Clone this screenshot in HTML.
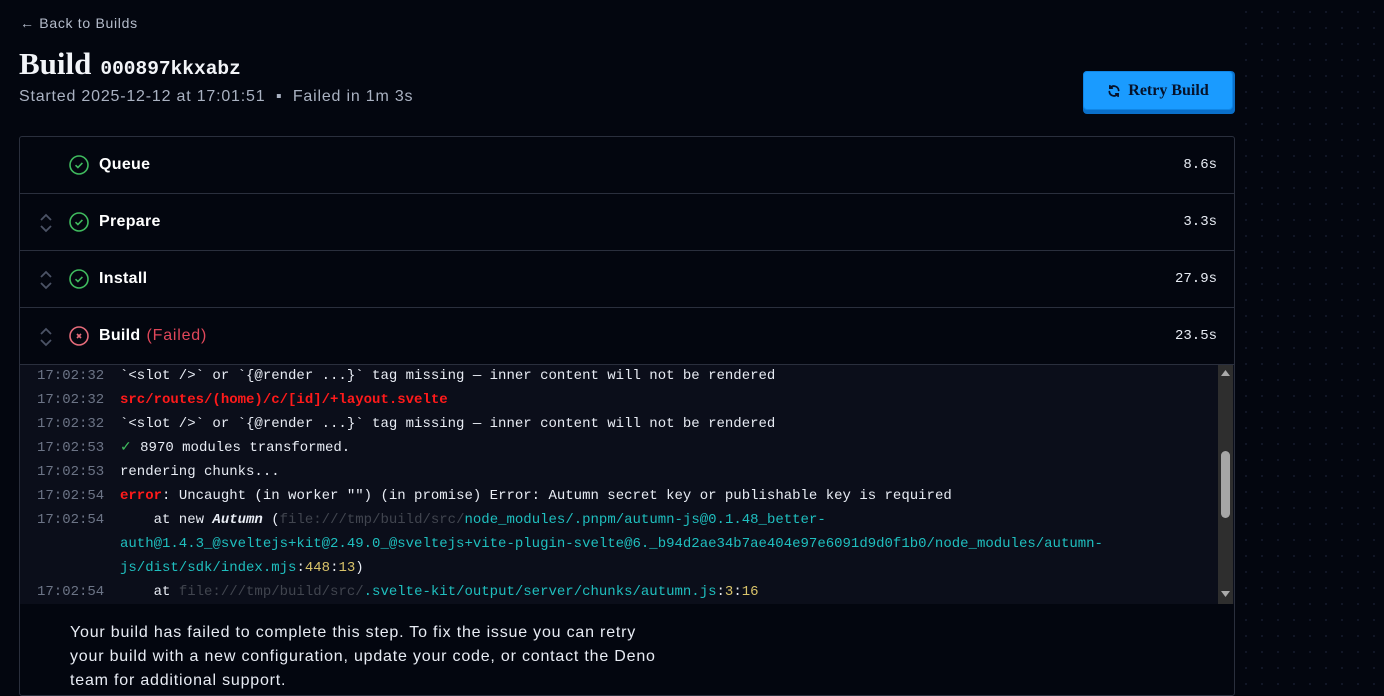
<!DOCTYPE html>
<html><head><meta charset="utf-8"><style>
*{box-sizing:border-box;margin:0;padding:0}
body{width:1384px;height:690px;overflow:hidden;background:#03060f;background-image:radial-gradient(circle,#121728 1px,transparent 1.2px);background-size:16px 16px;background-position:6px 4px;font-family:"Liberation Sans",sans-serif;color:#e8ecf4;position:relative}
.main{position:absolute;left:0;top:0;width:1236px;height:690px;background:#03060f}
.back{position:absolute;left:20px;top:15px;font-size:14px;color:#b4bccb;letter-spacing:0.7px}
h1{position:absolute;left:19px;top:46px;font-family:"Liberation Serif",serif;font-size:31px;font-weight:bold;color:#f2f4f8}
h1 span{font-family:"Liberation Mono",monospace;font-size:19.5px;font-weight:bold;margin-left:9px}
.sub{position:absolute;left:19px;top:88px;font-size:16px;color:#aab2c2;letter-spacing:0.8px}
.btn{position:absolute;left:1083px;top:71px;width:152px;height:43px;background:#0a6fc9;border-radius:4px}
.btn div{width:150px;height:39px;background:#1a9bff;border-radius:4px;border:1px solid #0f86e6;display:flex;align-items:center;justify-content:center;gap:7px;font-family:"Liberation Serif",serif;font-weight:bold;font-size:16px;color:#06122a}
.box{position:absolute;left:19px;top:136px;width:1216px;height:560px;border:1px solid #2a2f3d;border-radius:3px}
.row{position:absolute;left:0;width:1214px;height:57px;border-bottom:1px solid #2a2f3d;display:flex;align-items:center}
.row .ch{position:absolute;left:19px;top:19px}
.row .ic{position:absolute;left:49px;top:18px}
.row .nm{position:absolute;left:79px;top:19px;font-weight:bold;font-size:16px;color:#fff;letter-spacing:0.3px}
.row .nm i{font-style:normal;font-weight:normal;color:#e0475a;margin-left:6px;letter-spacing:0.8px}
.row .t{position:absolute;right:17px;top:20px;font-family:"Liberation Mono",monospace;font-size:14px;color:#e8ecf4}
.log{position:absolute;left:0;top:228px;width:1214px;height:239px;background:#0b0e1a;font-family:"Liberation Mono",monospace;font-size:14px;overflow:hidden}
.l{position:absolute;left:17px;white-space:pre;line-height:24px;color:#e8ecf4}
.l b{font-weight:normal;color:#6c7486;display:inline-block;width:83px}
.r{color:#ff1a1a;font-weight:bold}.c{color:#1fbfbf}.g{color:#41454f}.y{color:#d9c36a}
.sb{position:absolute;right:1px;top:0;width:15px;height:239px;background:#2e2e2e}
.msg{position:absolute;left:50px;top:484px;font-size:16px;line-height:24px;color:#e8ecf4;letter-spacing:0.8px}
</style></head><body>
<div class="main">
<div class="back">← Back to Builds</div>
<h1>Build<span>000897kkxabz</span></h1>
<div class="sub">Started 2025-12-12 at 17:01:51 &nbsp;▪&nbsp; Failed in 1m 3s</div>
<div class="btn"><div><svg width="14" height="14" viewBox="0 0 24 24" fill="none" stroke="#06122a" stroke-width="3" stroke-linecap="round"><path d="M20 11A8 8 0 0 0 5.5 7M4 13a8 8 0 0 0 14.5 4"/><path d="M5 3v4h4M19 21v-4h-4"/></svg>Retry Build</div></div>
<div class="box">
 <div class="row" style="top:0"><svg class="ic" width="20" height="20" viewBox="0 0 20 20"><circle cx="10" cy="10" r="9" fill="none" stroke="#3fba5e" stroke-width="1.6"/><path d="M6.5 10.2l2.4 2.3 4.5-4.6" fill="none" stroke="#3fba5e" stroke-width="1.6"/></svg><div class="nm">Queue</div><div class="t">8.6s</div></div>
 <div class="row" style="top:57px"><svg class="ch" width="14" height="20" viewBox="0 0 14 20" fill="none" stroke="#4c5366" stroke-width="1.8"><path d="M2 7l5-5 5 5M2 13l5 5 5-5"/></svg><svg class="ic" width="20" height="20" viewBox="0 0 20 20"><circle cx="10" cy="10" r="9" fill="none" stroke="#3fba5e" stroke-width="1.6"/><path d="M6.5 10.2l2.4 2.3 4.5-4.6" fill="none" stroke="#3fba5e" stroke-width="1.6"/></svg><div class="nm">Prepare</div><div class="t">3.3s</div></div>
 <div class="row" style="top:114px"><svg class="ch" width="14" height="20" viewBox="0 0 14 20" fill="none" stroke="#4c5366" stroke-width="1.8"><path d="M2 7l5-5 5 5M2 13l5 5 5-5"/></svg><svg class="ic" width="20" height="20" viewBox="0 0 20 20"><circle cx="10" cy="10" r="9" fill="none" stroke="#3fba5e" stroke-width="1.6"/><path d="M6.5 10.2l2.4 2.3 4.5-4.6" fill="none" stroke="#3fba5e" stroke-width="1.6"/></svg><div class="nm">Install</div><div class="t">27.9s</div></div>
 <div class="row" style="top:171px"><svg class="ch" width="14" height="20" viewBox="0 0 14 20" fill="none" stroke="#4c5366" stroke-width="1.8"><path d="M2 7l5-5 5 5M2 13l5 5 5-5"/></svg><svg class="ic" width="20" height="20" viewBox="0 0 20 20"><circle cx="10" cy="10" r="9" fill="none" stroke="#e56b7a" stroke-width="1.6"/><path d="M8 8l4 4M12 8l-4 4" stroke="#e56b7a" stroke-width="1.6"/></svg><div class="nm">Build<i>(Failed)</i></div><div class="t">23.5s</div></div>
 <div class="log">
  <div class="l" style="top:-1px"><b>17:02:32</b>`&lt;slot /&gt;` or `{@render ...}` tag missing — inner content will not be rendered</div>
  <div class="l" style="top:23px"><b>17:02:32</b><span class="r">src/routes/(home)/c/[id]/+layout.svelte</span></div>
  <div class="l" style="top:47px"><b>17:02:32</b>`&lt;slot /&gt;` or `{@render ...}` tag missing — inner content will not be rendered</div>
  <div class="l" style="top:71px"><b>17:02:53</b><span style="color:#3fba5e">✓</span> 8970 modules transformed.</div>
  <div class="l" style="top:95px"><b>17:02:53</b>rendering chunks...</div>
  <div class="l" style="top:119px"><b>17:02:54</b><span class="r">error</span>: Uncaught (in worker "") (in promise) Error: Autumn secret key or publishable key is required</div>
  <div class="l" style="top:143px"><b>17:02:54</b>    at new <i style="font-weight:bold">Autumn</i> (<span class="g">file:///tmp/build/src/</span><span class="c">node_modules/.pnpm/autumn-js@0.1.48_better-</span></div>
  <div class="l" style="top:167px"><b></b><span class="c">auth@1.4.3_@sveltejs+kit@2.49.0_@sveltejs+vite-plugin-svelte@6._b94d2ae34b7ae404e97e6091d9d0f1b0/node_modules/autumn-</span></div>
  <div class="l" style="top:191px"><b></b><span class="c">js/dist/sdk/index.mjs</span>:<span class="y">448</span>:<span class="y">13</span>)</div>
  <div class="l" style="top:215px"><b>17:02:54</b>    at <span class="g">file:///tmp/build/src/</span><span class="c">.svelte-kit/output/server/chunks/autumn.js</span>:<span class="y">3</span>:<span class="y">16</span></div>
  <div class="sb"><svg style="position:absolute;left:3px;top:5px" width="9" height="6"><path d="M0 6L4.5 0 9 6z" fill="#aaa"/></svg><div style="position:absolute;left:3px;top:86px;width:9px;height:67px;border-radius:5px;background:#a6a6a6"></div><svg style="position:absolute;left:3px;top:226px" width="9" height="6"><path d="M0 0L4.5 6 9 0z" fill="#aaa"/></svg></div>
 </div>
 <div class="msg">Your build has failed to complete this step. To fix the issue you can retry<br>your build with a new configuration, update your code, or contact the Deno<br>team for additional support.</div>
</div>
</div>
</body></html>
